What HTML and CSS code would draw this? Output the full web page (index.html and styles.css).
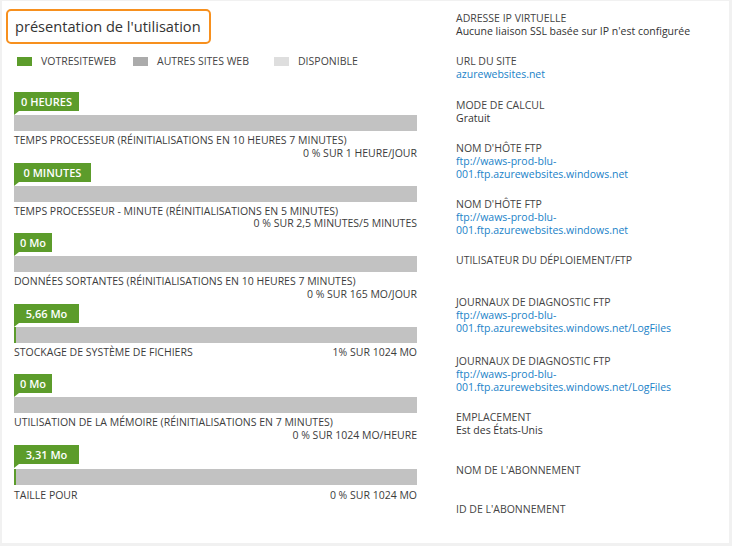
FILE: index.html
```html
<!DOCTYPE html>
<html lang="fr">
<head>
<meta charset="utf-8">
<title>présentation de l'utilisation</title>
<link rel="stylesheet" href="styles.css">
</head>
<body>
<div class="panel">
  <section class="usage">
    <div class="title-box"><h1 class="title">présentation de l'utilisation</h1></div>
    <div class="legend">
      <span class="legend-item"><i class="swatch swatch-site"></i>VOTRESITEWEB</span>
      <span class="legend-item"><i class="swatch swatch-other"></i>AUTRES SITES WEB</span>
      <span class="legend-item"><i class="swatch swatch-free"></i>DISPONIBLE</span>
    </div>

    <div class="metric">
      <span class="tag tag-w65">0 HEURES</span>
      <div class="bar"></div>
      <div class="meta"><span class="meta-label">TEMPS PROCESSEUR (RÉINITIALISATIONS EN 10 HEURES 7 MINUTES)</span><span class="meta-value">0 % SUR 1 HEURE/JOUR</span></div>
    </div>
    <div class="metric">
      <span class="tag tag-w77">0 MINUTES</span>
      <div class="bar"></div>
      <div class="meta"><span class="meta-label">TEMPS PROCESSEUR - MINUTE (RÉINITIALISATIONS EN 5 MINUTES)</span><span class="meta-value">0 % SUR 2,5 MINUTES/5 MINUTES</span></div>
    </div>
    <div class="metric">
      <span class="tag tag-w38">0 Mo</span>
      <div class="bar"></div>
      <div class="meta"><span class="meta-label">DONNÉES SORTANTES (RÉINITIALISATIONS EN 10 HEURES 7 MINUTES)</span><span class="meta-value">0 % SUR 165 MO/JOUR</span></div>
    </div>
    <div class="metric">
      <span class="tag tag-w65">5,66 Mo</span>
      <div class="bar"><div class="fill" style="width:0.55%"></div></div>
      <div class="meta"><span class="meta-label">STOCKAGE DE SYSTÈME DE FICHIERS</span><span class="meta-value">1% SUR 1024 MO</span></div>
    </div>
    <div class="metric">
      <span class="tag tag-w38">0 Mo</span>
      <div class="bar"></div>
      <div class="meta"><span class="meta-label">UTILISATION DE LA MÉMOIRE (RÉINITIALISATIONS EN 7 MINUTES)</span><span class="meta-value">0 % SUR 1024 MO/HEURE</span></div>
    </div>
    <div class="metric metric-last">
      <span class="tag tag-w65">3,31 Mo</span>
      <div class="bar"><div class="fill" style="width:0.32%"></div></div>
      <div class="meta"><span class="meta-label">TAILLE POUR</span><span class="meta-value">0 % SUR 1024 MO</span></div>
    </div>
  </section>

  <aside class="props">
    <div class="prop"><div class="prop-label">ADRESSE IP VIRTUELLE</div><div class="prop-value">Aucune liaison SSL basée sur IP n'est configurée</div></div>
    <div class="prop prop-url"><div class="prop-label">URL DU SITE</div><div class="prop-value"><a href="#">azurewebsites.net</a></div></div>
    <div class="prop"><div class="prop-label">MODE DE CALCUL</div><div class="prop-value">Gratuit</div></div>
    <div class="prop"><div class="prop-label">NOM D'HÔTE FTP</div><div class="prop-value"><a href="#">ftp://waws-prod-blu-<br>001.ftp.azurewebsites.windows.net</a></div></div>
    <div class="prop"><div class="prop-label">NOM D'HÔTE FTP</div><div class="prop-value"><a href="#">ftp://waws-prod-blu-<br>001.ftp.azurewebsites.windows.net</a></div></div>
    <div class="prop"><div class="prop-label">UTILISATEUR DU DÉPLOIEMENT/FTP</div><div class="prop-value prop-empty"></div></div>
    <div class="prop prop-loose"><div class="prop-label">JOURNAUX DE DIAGNOSTIC FTP</div><div class="prop-value"><a href="#">ftp://waws-prod-blu-<br>001.ftp.azurewebsites.windows.net/LogFiles</a></div></div>
    <div class="prop"><div class="prop-label">JOURNAUX DE DIAGNOSTIC FTP</div><div class="prop-value"><a href="#">ftp://waws-prod-blu-<br>001.ftp.azurewebsites.windows.net/LogFiles</a></div></div>
    <div class="prop prop-spaced"><div class="prop-label">EMPLACEMENT</div><div class="prop-value">Est des États-Unis</div></div>
    <div class="prop prop-tight"><div class="prop-label">NOM DE L'ABONNEMENT</div><div class="prop-value prop-empty"></div></div>
    <div class="prop"><div class="prop-label">ID DE L'ABONNEMENT</div><div class="prop-value prop-empty"></div></div>
  </aside>
</div>
</body>
</html>
```

FILE: styles.css
```css
* { box-sizing: border-box; }

html, body {
  margin: 0;
  height: 100%;
}

body {
  background: #f1f1f1;
  padding: 1px 3px 3px 2px;
  font-family: "Open Sans", "Noto Sans", sans-serif;
  font-size: 10.5px;
  color: #3c3c3c;
}

.panel {
  background: #ffffff;
  height: 542px;
  display: flex;
}

.usage {
  width: 403px;
  margin-left: 12px;
  padding-top: 8px;
}

.title-box {
  display: inline-block;
  margin-left: -8px;
  border: 2px solid #f7901e;
  border-radius: 5px;
  padding: 0 8px 0 7px;
  height: 35px;
}

.title {
  margin: 0;
  font-weight: normal;
  font-size: 14.6px;
  line-height: 31px;
  color: #333333;
}

.legend {
  display: grid;
  grid-template-columns: 116px 141px auto;
  margin: 10px 0 0 3px;
  height: 13px;
  align-items: center;
  color: #444444;
}

.legend-item {
  display: flex;
  align-items: center;
  gap: 9px;
}

.swatch {
  display: inline-block;
  width: 15px;
  height: 9px;
}

.swatch-site { background: #5c9c2b; }
.swatch-other { background: #ababab; }
.swatch-free { background: #dedede; }

.legend + .metric { margin-top: 25px; }

.metric {
  height: 70.6px;
}

.tag {
  position: relative;
  display: inline-block;
  height: 19px;
  line-height: 19px;
  background: #5c9c2b;
  color: #ffffff;
  font-size: 11px;
  font-weight: 600;
  text-align: center;
}

.tag::after {
  content: "";
  position: absolute;
  left: 0;
  top: 100%;
  border-top: 4px solid #5c9c2b;
  border-right: 5px solid transparent;
}

.tag-w38 { width: 38px; }
.tag-w65 { width: 65px; }
.tag-w77 { width: 77px; }

.bar {
  height: 16px;
  margin-top: 4px;
  background: #c2c2c2;
}

.metric-last .bar { margin-top: 5px; }
.metric-last .meta { margin-top: 4px; }

.fill {
  height: 100%;
  min-width: 2px;
  background: #5c9c2b;
}

.meta {
  display: flex;
  flex-wrap: wrap;
  margin-top: 3px;
  line-height: 12.5px;
  color: #3c3c3c;
}

.meta-value {
  margin-left: auto;
}

.props {
  flex: 1;
  margin-left: 39px;
  padding-top: 11px;
  line-height: 13px;
}

.prop {
  margin-bottom: 17px;
}

.prop-url { margin-bottom: 18px; }
.prop-loose { margin-bottom: 20px; }
.prop-spaced { margin-bottom: 27px; }
.prop-tight { margin-bottom: 14px; }

.prop-label {
  color: #444444;
}

.prop-value {
  color: #333333;
}

.prop-value a {
  color: #1a82c8;
  text-decoration: none;
}

.prop-empty {
  height: 12px;
}
```
